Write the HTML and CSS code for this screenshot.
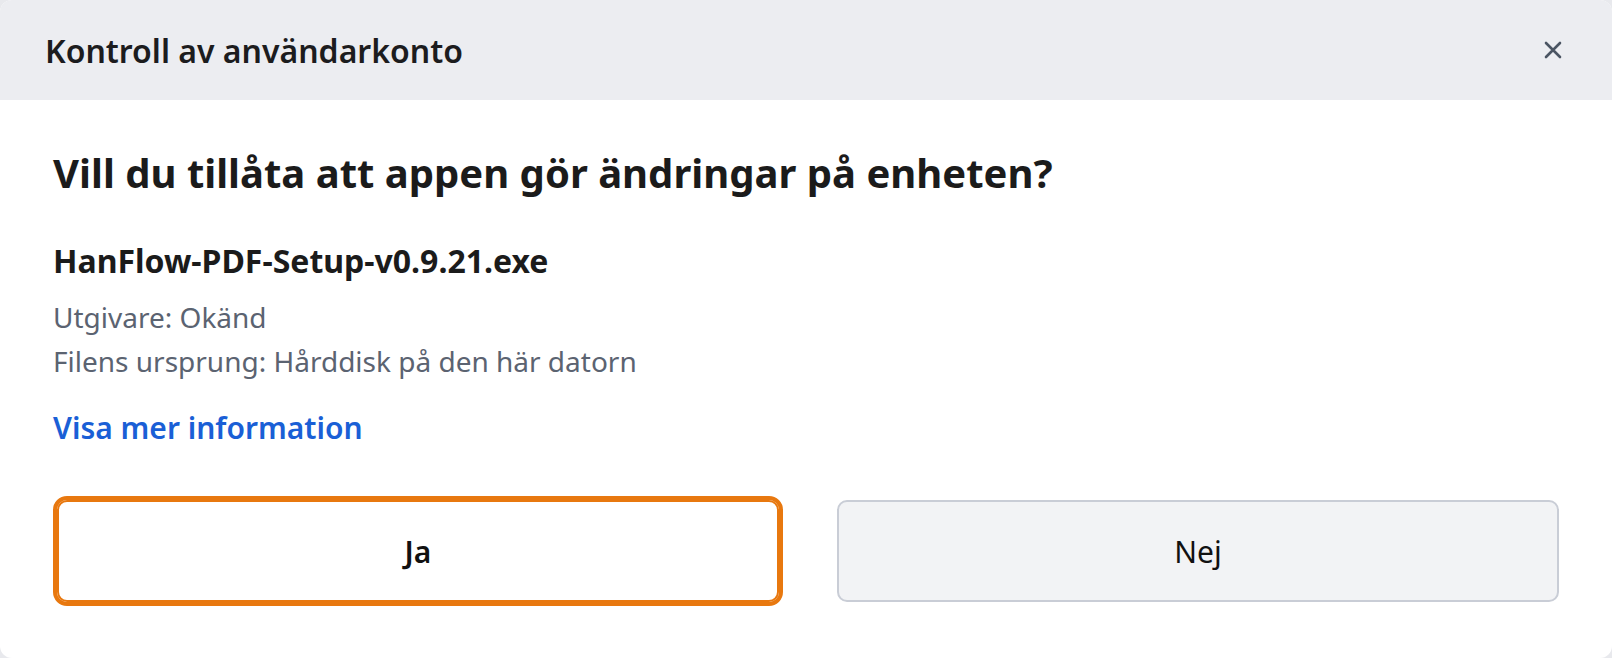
FILE: index.html
```html
<!DOCTYPE html>
<html lang="sv">
<head>
    <meta charset="UTF-8">
    <meta name="viewport" content="width=device-width, initial-scale=1.0">
    <title>Kontroll av användarkonto</title>
    <link rel="stylesheet" href="styles.css">
</head>
<body>

    <div class="dialog">
        <div class="dialog-header">
            <h1 class="dialog-title">Kontroll av användarkonto</h1>
            <button class="close-btn" aria-label="Stäng">
                <svg width="18" height="18" viewBox="0 0 18 18">
                    <path d="M2 2 L16 16 M16 2 L2 16" stroke="#4b5563" stroke-width="2.6" stroke-linecap="round"/>
                </svg>
            </button>
        </div>

        <div class="dialog-body">
            <h2 class="question">Vill du tillåta att appen gör ändringar på enheten?</h2>
            <p class="app-name">HanFlow-PDF-Setup-v0.9.21.exe</p>
            <p class="meta">Utgivare: Okänd</p>
            <p class="meta">Filens ursprung: Hårddisk på den här datorn</p>
            <a class="more-link" href="#">Visa mer information</a>

            <div class="actions">
                <button class="btn btn-yes">Ja</button>
                <button class="btn btn-no">Nej</button>
            </div>
        </div>
    </div>

</body>
</html>
```

FILE: styles.css
```css
        body {
            font-family: "Noto Sans", "Open Sans", sans-serif;
            background-color: #e8e9ed;
            margin: 0;
            padding: 0;
        }
        .dialog {
            height: 100vh;
            background-color: white;
            border-radius: 12px;
            overflow: hidden;
            display: flex;
            flex-direction: column;
        }
        .dialog-header {
            height: 100px;
            background-color: #ecedf1;
            display: flex;
            align-items: center;
            justify-content: space-between;
            padding: 0 50px 0 45px;
            flex-shrink: 0;
        }
        .dialog-title {
            margin: 0;
            font-size: 32px;
            font-weight: 600;
            color: #1c1c1e;
        }
        .close-btn {
            background: none;
            border: none;
            padding: 0;
            width: 18px;
            height: 18px;
            cursor: pointer;
            display: flex;
        }
        .dialog-body {
            padding: 0 53px;
            flex: 1;
            display: flex;
            flex-direction: column;
        }
        .question {
            margin: 46px 0 0 0;
            font-size: 40px;
            font-weight: 700;
            color: #1b1b1b;
            line-height: 54px;
        }
        .app-name {
            margin: 41px 0 0 0;
            font-size: 32px;
            font-weight: 700;
            color: #1b1b1b;
            line-height: 40px;
        }
        .meta {
            margin: 0;
            font-size: 28px;
            color: #5b6371;
            line-height: 44px;
        }
        .app-name + .meta {
            margin-top: 14px;
        }
        .more-link {
            margin-top: 25px;
            font-size: 30px;
            font-weight: 600;
            color: #1a5fd6;
            text-decoration: none;
            line-height: 40px;
            align-self: flex-start;
        }
        .actions {
            display: grid;
            grid-template-columns: 1fr 1fr;
            gap: 58px;
            margin-top: 52px;
            padding-left: 4px;
        }
        .btn {
            height: 102px;
            border-radius: 10px;
            font-family: "Noto Sans", sans-serif;
            font-size: 30px;
            color: #111;
            cursor: pointer;
        }
        .btn-yes {
            background-color: white;
            border: 2px solid #e8780f;
            outline: 4px solid #e8780f;
            font-weight: 600;
        }
        .btn-no {
            background-color: #f2f3f5;
            border: 2px solid #c9cdd6;
        }
```
